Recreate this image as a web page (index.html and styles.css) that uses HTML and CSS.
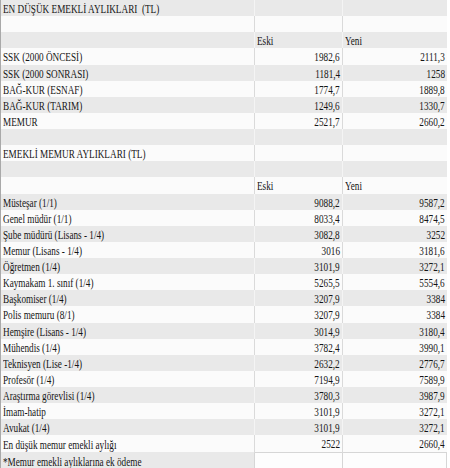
FILE: index.html
```html
<!DOCTYPE html>
<html lang="tr">
<head>
<meta charset="utf-8">
<title>Emekli Aylıkları</title>
<link rel="stylesheet" href="styles.css">
</head>
<body>
<table class="sheet">
  <colgroup><col class="c1"><col class="c2"><col class="c3"></colgroup>
  <tbody>
    <tr class="g"><td><span>EN DÜŞÜK EMEKLİ AYLIKLARI &nbsp;(TL)</span></td><td></td><td></td></tr>
    <tr class="w"><td></td><td></td><td></td></tr>
    <tr class="g"><td></td><td><span>Eski</span></td><td><span>Yeni</span></td></tr>
    <tr class="w"><td><span>SSK (2000 ÖNCESİ)</span></td><td class="n"><span>1982,6</span></td><td class="n"><span>2111,3</span></td></tr>
    <tr class="g"><td><span>SSK (2000 SONRASI)</span></td><td class="n"><span>1181,4</span></td><td class="n"><span>1258</span></td></tr>
    <tr class="w"><td><span>BAĞ-KUR (ESNAF)</span></td><td class="n"><span>1774,7</span></td><td class="n"><span>1889,8</span></td></tr>
    <tr class="g"><td><span>BAĞ-KUR (TARIM)</span></td><td class="n"><span>1249,6</span></td><td class="n"><span>1330,7</span></td></tr>
    <tr class="w"><td><span>MEMUR</span></td><td class="n"><span>2521,7</span></td><td class="n"><span>2660,2</span></td></tr>
    <tr class="g"><td></td><td></td><td></td></tr>
    <tr class="w"><td><span>EMEKLİ MEMUR AYLIKLARI (TL)</span></td><td></td><td></td></tr>
    <tr class="g"><td></td><td></td><td></td></tr>
    <tr class="w"><td></td><td><span>Eski</span></td><td><span>Yeni</span></td></tr>
    <tr class="g"><td><span>Müsteşar (1/1)</span></td><td class="n"><span>9088,2</span></td><td class="n"><span>9587,2</span></td></tr>
    <tr class="w"><td><span>Genel müdür (1/1)</span></td><td class="n"><span>8033,4</span></td><td class="n"><span>8474,5</span></td></tr>
    <tr class="g"><td><span>Şube müdürü (Lisans - 1/4)</span></td><td class="n"><span>3082,8</span></td><td class="n"><span>3252</span></td></tr>
    <tr class="w"><td><span>Memur (Lisans - 1/4)</span></td><td class="n"><span>3016</span></td><td class="n"><span>3181,6</span></td></tr>
    <tr class="g"><td><span>Öğretmen (1/4)</span></td><td class="n"><span>3101,9</span></td><td class="n"><span>3272,1</span></td></tr>
    <tr class="w"><td><span>Kaymakam 1. sınıf (1/4)</span></td><td class="n"><span>5265,5</span></td><td class="n"><span>5554,6</span></td></tr>
    <tr class="g"><td><span>Başkomiser (1/4)</span></td><td class="n"><span>3207,9</span></td><td class="n"><span>3384</span></td></tr>
    <tr class="w"><td><span>Polis memuru (8/1)</span></td><td class="n"><span>3207,9</span></td><td class="n"><span>3384</span></td></tr>
    <tr class="g"><td><span>Hemşire (Lisans - 1/4)</span></td><td class="n"><span>3014,9</span></td><td class="n"><span>3180,4</span></td></tr>
    <tr class="w"><td><span>Mühendis (1/4)</span></td><td class="n"><span>3782,4</span></td><td class="n"><span>3990,1</span></td></tr>
    <tr class="g"><td><span>Teknisyen (Lise -1/4)</span></td><td class="n"><span>2632,2</span></td><td class="n"><span>2776,7</span></td></tr>
    <tr class="w"><td><span>Profesör (1/4)</span></td><td class="n"><span>7194,9</span></td><td class="n"><span>7589,9</span></td></tr>
    <tr class="g"><td><span>Araştırma görevlisi (1/4)</span></td><td class="n"><span>3780,3</span></td><td class="n"><span>3987,9</span></td></tr>
    <tr class="w"><td><span>İmam-hatip</span></td><td class="n"><span>3101,9</span></td><td class="n"><span>3272,1</span></td></tr>
    <tr class="g"><td><span>Avukat (1/4)</span></td><td class="n"><span>3101,9</span></td><td class="n"><span>3272,1</span></td></tr>
    <tr class="w"><td><span>En düşük memur emekli aylığı</span></td><td class="n"><span>2522</span></td><td class="n"><span>2660,4</span></td></tr>
    <tr class="g last"><td><span>*Memur emekli aylıklarına ek ödeme</span></td><td></td><td></td></tr>
  </tbody>
</table>
</body>
</html>
```
FILE: styles.css
```css
html, body {
  margin: 0;
  padding: 0;
  background: #ffffff;
}

.sheet {
  border-collapse: collapse;
  table-layout: fixed;
  width: 447px;
  border-left: 1px solid #a9a9a9;
  font-family: "Liberation Serif", "Times New Roman", serif;
  font-size: 11.5px;
  color: #151515;
}

.c1 { width: 254px; }
.c2 { width: 88px; }
.c3 { width: 104px; }

.sheet tr { height: 16.14px; }

.sheet td {
  padding: 0 2px;
  height: 16.14px;
  line-height: 14px;
  white-space: nowrap;
  overflow: visible;
  vertical-align: middle;
}

.sheet td span {
  display: inline-block;
  transform: scaleX(0.8);
  transform-origin: left center;
  padding-top: 2px;
}

.sheet td.n { text-align: right; }
.sheet td.n span { transform-origin: right center; }

.g { background: #e9e9e9; }
.w { background: #fbfbfb; }

.g td + td { border-left: 1px solid #f4f4f4; }
.w td + td { border-left: 1px solid #dadada; }

.last td + td {
  background: #fdfdfd;
  border: 1px solid #d6d6d6;
}
```
